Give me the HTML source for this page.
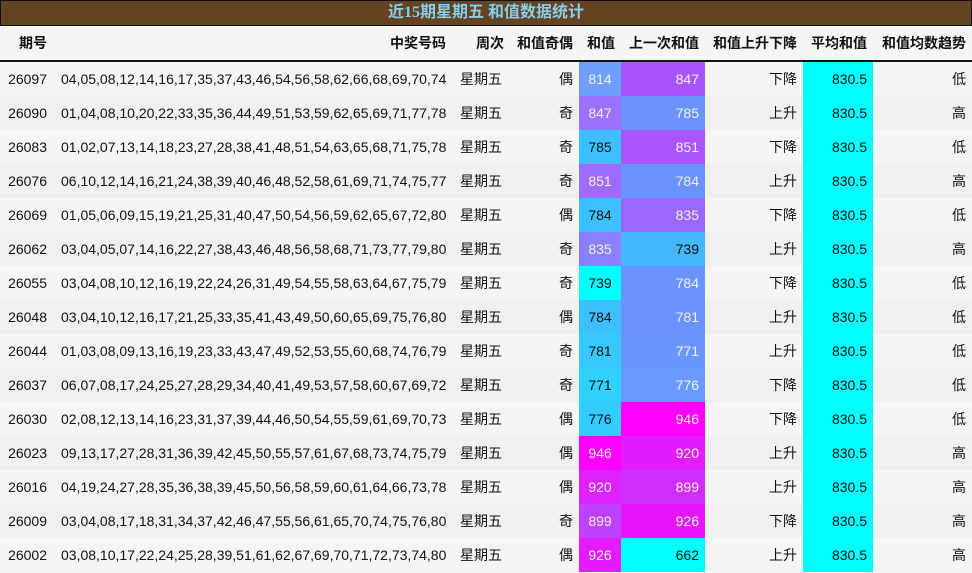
<!DOCTYPE html>
<html><head><meta charset="utf-8"><style>
body{margin:0;background:#f5f5f5;font-family:"Liberation Sans","Noto Sans CJK SC",sans-serif;font-size:14px;color:#111;}
.t{height:24px;background:#654321;border:1px solid #111;color:#87ceeb;font-weight:bold;font-size:16px;text-align:center;line-height:24px;font-family:"Liberation Serif","Noto Sans CJK SC",serif;}
table{border-collapse:collapse;width:972px;table-layout:fixed}
th{height:34px;font-weight:bold;text-align:right;padding:0 6px;border-bottom:2px solid #111;background:#f5f5f5}
td{height:34px;padding:0 6px;text-align:right;white-space:nowrap}
th:first-child,td:first-child{padding-right:8px;padding-left:0}
tr:nth-child(odd) td{background:#f0f0f0}
tr:nth-child(even) td{background:#f5f5f5}
td.c{text-align:center}
td.w{color:#f0f0f0}
td.k{color:#111}
td.a{background:#00ffff!important}
</style></head><body>
<div class="t">近15期星期五 和值数据统计</div>
<table>
<colgroup><col style="width:55px"><col style="width:397px"><col style="width:58px"><col style="width:69px"><col style="width:42px"><col style="width:84px"><col style="width:98px"><col style="width:70px"><col style="width:99px"></colgroup>
<tr><th>期号</th><th>中奖号码</th><th>周次</th><th>和值奇偶</th><th>和值</th><th>上一次和值</th><th>和值上升下降</th><th>平均和值</th><th>和值均数趋势</th></tr>
<tr><td>26097</td><td>04,05,08,12,14,16,17,35,37,43,46,54,56,58,62,66,68,69,70,74</td><td class="c">星期五</td><td>偶</td><td class="c w" style="background:#6f9fff">814</td><td class="w" style="background:#a855ff">847</td><td>下降</td><td class="a">830.5</td><td>低</td></tr>
<tr><td>26090</td><td>01,04,08,10,20,22,33,35,36,44,49,51,53,59,62,65,69,71,77,78</td><td class="c">星期五</td><td>奇</td><td class="c w" style="background:#9b72ff">847</td><td class="w" style="background:#6a93ff">785</td><td>上升</td><td class="a">830.5</td><td>高</td></tr>
<tr><td>26083</td><td>01,02,07,13,14,18,23,27,28,38,41,48,51,54,63,65,68,71,75,78</td><td class="c">星期五</td><td>奇</td><td class="c k" style="background:#3cc0ff">785</td><td class="w" style="background:#aa55ff">851</td><td>下降</td><td class="a">830.5</td><td>低</td></tr>
<tr><td>26076</td><td>06,10,12,14,16,21,24,38,39,40,46,48,52,58,61,69,71,74,75,77</td><td class="c">星期五</td><td>奇</td><td class="c w" style="background:#9d6cff">851</td><td class="w" style="background:#6a93ff">784</td><td>上升</td><td class="a">830.5</td><td>高</td></tr>
<tr><td>26069</td><td>01,05,06,09,15,19,21,25,31,40,47,50,54,56,59,62,65,67,72,80</td><td class="c">星期五</td><td>偶</td><td class="c k" style="background:#3cc0ff">784</td><td class="w" style="background:#9c66ff">835</td><td>下降</td><td class="a">830.5</td><td>低</td></tr>
<tr><td>26062</td><td>03,04,05,07,14,16,22,27,38,43,46,48,56,58,68,71,73,77,79,80</td><td class="c">星期五</td><td>奇</td><td class="c w" style="background:#8a80ff">835</td><td class="k" style="background:#44b8ff">739</td><td>上升</td><td class="a">830.5</td><td>高</td></tr>
<tr><td>26055</td><td>03,04,08,10,12,16,19,22,24,26,31,49,54,55,58,63,64,67,75,79</td><td class="c">星期五</td><td>奇</td><td class="c k" style="background:#00ffff">739</td><td class="w" style="background:#6a93ff">784</td><td>下降</td><td class="a">830.5</td><td>低</td></tr>
<tr><td>26048</td><td>03,04,10,12,16,17,21,25,33,35,41,43,49,50,60,65,69,75,76,80</td><td class="c">星期五</td><td>偶</td><td class="c k" style="background:#3cc0ff">784</td><td class="w" style="background:#6b93ff">781</td><td>上升</td><td class="a">830.5</td><td>低</td></tr>
<tr><td>26044</td><td>01,03,08,09,13,16,19,23,33,43,47,49,52,53,55,60,68,74,76,79</td><td class="c">星期五</td><td>奇</td><td class="c k" style="background:#36c8ff">781</td><td class="w" style="background:#6a97ff">771</td><td>上升</td><td class="a">830.5</td><td>低</td></tr>
<tr><td>26037</td><td>06,07,08,17,24,25,27,28,29,34,40,41,49,53,57,58,60,67,69,72</td><td class="c">星期五</td><td>奇</td><td class="c k" style="background:#30d0ff">771</td><td class="w" style="background:#6a9aff">776</td><td>下降</td><td class="a">830.5</td><td>低</td></tr>
<tr><td>26030</td><td>02,08,12,13,14,16,23,31,37,39,44,46,50,54,55,59,61,69,70,73</td><td class="c">星期五</td><td>偶</td><td class="c k" style="background:#33ccff">776</td><td class="w" style="background:#ff00ff">946</td><td>下降</td><td class="a">830.5</td><td>低</td></tr>
<tr><td>26023</td><td>09,13,17,27,28,31,36,39,42,45,50,55,57,61,67,68,73,74,75,79</td><td class="c">星期五</td><td>偶</td><td class="c w" style="background:#ff00ff">946</td><td class="w" style="background:#e31cff">920</td><td>上升</td><td class="a">830.5</td><td>高</td></tr>
<tr><td>26016</td><td>04,19,24,27,28,35,36,38,39,45,50,56,58,59,60,61,64,66,73,78</td><td class="c">星期五</td><td>偶</td><td class="c w" style="background:#dd22ff">920</td><td class="w" style="background:#d22dff">899</td><td>上升</td><td class="a">830.5</td><td>高</td></tr>
<tr><td>26009</td><td>03,04,08,17,18,31,34,37,42,46,47,55,56,61,65,70,74,75,76,80</td><td class="c">星期五</td><td>奇</td><td class="c w" style="background:#c040ff">899</td><td class="w" style="background:#ea15ff">926</td><td>下降</td><td class="a">830.5</td><td>高</td></tr>
<tr><td>26002</td><td>03,08,10,17,22,24,25,28,39,51,61,62,67,69,70,71,72,73,74,80</td><td class="c">星期五</td><td>偶</td><td class="c w" style="background:#e41bff">926</td><td class="k" style="background:#00ffff">662</td><td>上升</td><td class="a">830.5</td><td>高</td></tr>
</table>
</body></html>
